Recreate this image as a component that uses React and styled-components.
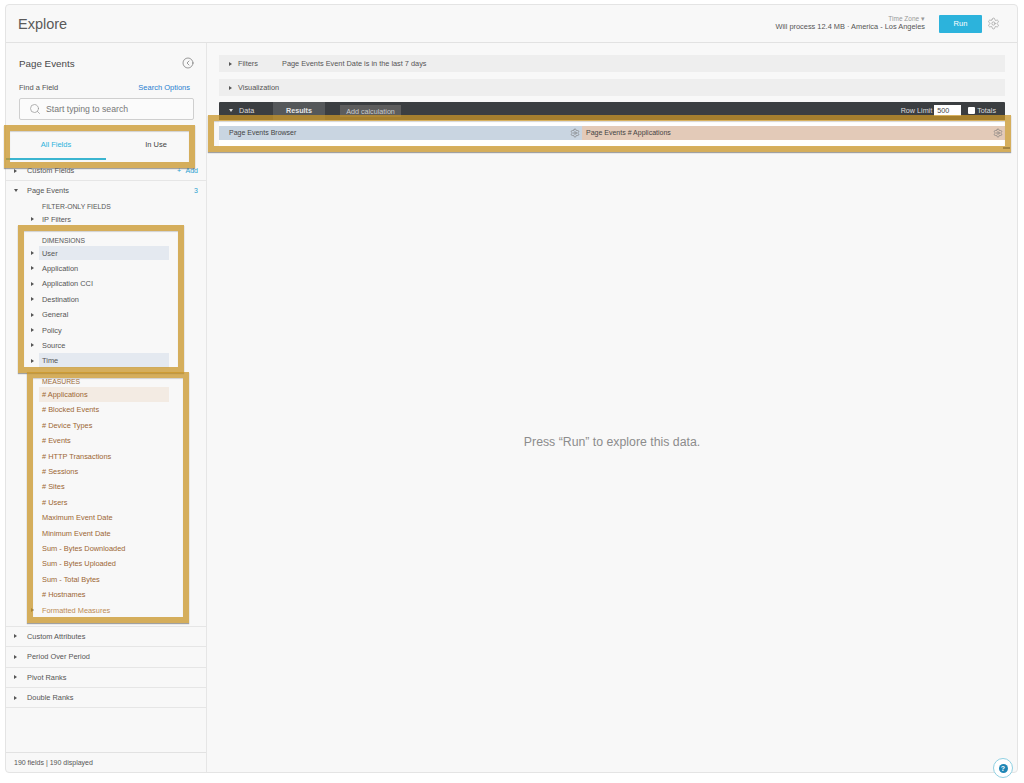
import React from 'react';
import styled, { createGlobalStyle } from 'styled-components';
import { Search, Settings, CircleChevronLeft } from 'lucide-react';

const GlobalStyle = createGlobalStyle`
  html, body {
    margin: 0;
    padding: 0;
    background: #fff;
  }
  body {
    font-family: "Liberation Sans", Arial, sans-serif;
    color: #555;
  }
  * {
    box-sizing: border-box;
  }
`;

const Page = styled.div`
  position: relative;
  width: 1024px;
  height: 783px;
  padding: 4px 6px 10px 5px;
  overflow: hidden;
`;

const Frame = styled.div`
  display: flex;
  flex-direction: column;
  height: 100%;
  background: #f8f8f8;
  border: 1px solid #e4e4e4;
  border-radius: 4px;
`;

const Header = styled.header`
  display: flex;
  align-items: center;
  flex: 0 0 38px;
  padding: 0 17px 0 12px;
  border-bottom: 1px solid #e2e2e2;
`;

const Title = styled.h1`
  flex: 1;
  margin: 0;
  font-size: 14.5px;
  font-weight: 400;
  color: #5a5a5a;
`;

const ProcessInfo = styled.div`
  display: flex;
  flex-direction: column;
  align-items: flex-end;
  margin-right: 14px;
`;

const TimeZone = styled.span`
  font-size: 6.5px;
  line-height: 7px;
  color: #999;
`;

const ProcessText = styled.span`
  font-size: 7.4px;
  line-height: 10px;
  color: #555;
`;

const RunButton = styled.button`
  width: 43px;
  height: 18px;
  padding: 0;
  border: none;
  border-radius: 1px;
  background: #2cb3dc;
  color: #fff;
  font-family: inherit;
  font-size: 7.5px;
`;

const HeaderGear = styled(Settings)`
  margin-left: 5px;
  color: #a5a5a5;
`;

const Body = styled.div`
  display: flex;
  flex: 1;
  min-height: 0;
`;

const Sidebar = styled.aside`
  display: flex;
  flex-direction: column;
  flex: 0 0 201px;
  border-right: 1px solid #e6e6e6;
`;

const SideHead = styled.div`
  padding: 0 12px 0 13px;
`;

const SideTitleRow = styled.div`
  display: flex;
  align-items: center;
  justify-content: space-between;
  height: 40px;
`;

const SideTitle = styled.h2`
  margin: 0;
  font-size: 9.8px;
  font-weight: 400;
  color: #484848;
`;

const CollapseIcon = styled(CircleChevronLeft)`
  color: #666;
`;

const FindRow = styled.div`
  display: flex;
  align-items: center;
  justify-content: space-between;
  height: 8px;
  padding-right: 4px;
  font-size: 7.5px;
  color: #555;
`;

const BlueLink = styled.span`
  color: #2a7fd0;
`;

const SearchBox = styled.div`
  display: flex;
  align-items: center;
  gap: 5px;
  height: 22px;
  margin-top: 7px;
  padding-left: 9px;
  background: #fbfbfb;
  border: 1px solid #cfcfcf;
  border-radius: 2px;
  font-size: 8.7px;
  color: #777;
`;

const SearchIcon = styled(Search)`
  color: #999;
`;

const Tabs = styled.div`
  display: flex;
  height: 28px;
  margin: 12px 0 1px;
`;

const Tab = styled.div`
  display: flex;
  align-items: center;
  justify-content: center;
  width: 100px;
  padding-bottom: 2px;
  font-size: 7.5px;
  color: ${(p) => (p.$active ? '#2cb3dc' : '#444')};
  border-bottom: 2px solid ${(p) => (p.$active ? '#3bb5d0' : 'transparent')};
`;

const SectionRow = styled.div`
  display: flex;
  align-items: center;
  height: ${(p) => p.$height || '20.4px'};
  padding: 0 8px;
  border-bottom: ${(p) => (p.$flat ? 'none' : '1px solid #e6e6e6')};
  font-size: 7.4px;
  color: #555;
`;

const Caret = styled.i`
  flex: none;
  width: 0;
  height: 0;
  ${(p) => (p.$open
    ? `border-left: 2.5px solid transparent;
       border-right: 2.5px solid transparent;
       border-top: 3px solid ${p.$color || '#555'};`
    : `border-top: 2.5px solid transparent;
       border-bottom: 2.5px solid transparent;
       border-left: 3px solid ${p.$color || '#555'};`)}
`;

const SectionName = styled.span`
  flex: 1;
  margin-left: ${(p) => (p.$open ? '9px' : '10px')};
`;

const SectionAside = styled.span`
  color: #2a9fd0;
  font-size: 7px;
  word-spacing: 3px;
`;

const FieldGroup = styled.div`
  padding: 2.8px 0 8px;
  border-bottom: 1px solid #e6e6e6;
`;

const GroupLabel = styled.div`
  height: 8.4px;
  margin-top: ${(p) => (p.$first ? '0' : '10px')};
  padding-left: 36px;
  font-size: 6.8px;
  line-height: 8.4px;
  color: ${(p) => (p.$measure ? '#9a6a3c' : '#555')};
`;

const FieldRow = styled.div`
  display: flex;
  align-items: center;
  height: 15.4px;
  padding-left: ${(p) => (p.$bare ? '28px' : '25px')};
`;

const FieldName = styled.div`
  display: flex;
  align-items: center;
  width: 130px;
  height: 14.6px;
  margin-left: 5px;
  padding-left: 3px;
  font-size: 7.4px;
  color: ${(p) => p.$color || '#555'};
  background: ${(p) => p.$bg || 'transparent'};
`;

const SideFooter = styled.div`
  display: flex;
  align-items: center;
  height: 20px;
  margin-top: auto;
  padding-left: 8px;
  border-top: 1px solid #e2e2e2;
  font-size: 7px;
  color: #555;
`;

const Main = styled.main`
  display: flex;
  flex-direction: column;
  flex: 1;
  min-width: 0;
  padding-top: 12px;
`;

const FoldBar = styled.div`
  display: flex;
  align-items: center;
  gap: 6px;
  height: 17px;
  margin: 0 12px ${(p) => (p.$tight ? '6px' : '7px')};
  padding-left: 10px;
  background: #eee;
  font-size: 7.35px;
  color: #555;
`;

const FoldSummary = styled.span`
  margin-left: 18px;
`;

const DataBar = styled.div`
  display: flex;
  align-items: flex-start;
  height: 18px;
  margin: 0 12px;
  padding-left: 10px;
  background: #3b3e41;
  border-radius: 1px 1px 0 0;
  font-size: 7.2px;
  color: #ddd;
`;

const DataLabel = styled.div`
  display: flex;
  align-items: center;
  gap: 6px;
  width: 44px;
  height: 13px;
  margin-top: 2px;
`;

const ResultsTab = styled.div`
  display: flex;
  align-items: center;
  justify-content: center;
  width: 52px;
  height: 18px;
  padding-bottom: 2px;
  background: #55585a;
  font-weight: 700;
  color: #e6e6e6;
`;

const AddCalc = styled.div`
  display: flex;
  align-items: center;
  justify-content: center;
  width: 61px;
  height: 12px;
  margin: 3px auto 0 15px;
  background: #5d5d5d;
  color: #ccc;
`;

const RowLimit = styled.div`
  display: flex;
  align-items: center;
  height: 13px;
  margin-top: 2px;
  padding-right: 9px;
  gap: 2px;
`;

const LimitInput = styled.div`
  width: 27px;
  height: 11px;
  margin-right: 5px;
  padding-left: 3px;
  background: #fff;
  color: #444;
  line-height: 11px;
`;

const TotalsBox = styled.div`
  width: 7px;
  height: 7px;
  background: #fff;
  border-radius: 1px;
`;

const ResultsTable = styled.div`
  display: flex;
  height: 27px;
  margin: 0 12px;
  padding-top: 6px;
  background: #fff;
`;

const Column = styled.div`
  display: flex;
  align-items: center;
  justify-content: space-between;
  flex: ${(p) => p.$grow};
  height: 13.5px;
  padding: 0 2px 0 ${(p) => p.$pad};
  background: ${(p) => p.$bg};
  font-size: 7px;
  color: #444;
`;

const ColumnGear = styled(Settings)`
  color: #777;
`;

const EmptyState = styled.div`
  display: flex;
  align-items: center;
  justify-content: center;
  flex: 1;
  padding-bottom: 35px;
  font-size: 12.3px;
  color: #8c8c8c;
`;

const GoldBox = styled.div`
  position: absolute;
  left: ${(p) => p.$x}px;
  top: ${(p) => p.$y}px;
  width: ${(p) => p.$w}px;
  height: ${(p) => p.$h}px;
  border: 6px solid rgba(201, 149, 40, 0.75);
  box-shadow: 0 1px 1px rgba(90, 90, 90, 0.55), inset 0 1px 1px rgba(90, 90, 90, 0.25);
  pointer-events: none;
`;

const GoldNick = styled.div`
  position: absolute;
  left: 1003px;
  top: 147px;
  width: 7px;
  height: 2px;
  background: #a58542;
`;

const HelpButton = styled.div`
  position: absolute;
  left: 993px;
  top: 758px;
  display: flex;
  align-items: center;
  justify-content: center;
  width: 20px;
  height: 20px;
  background: #fff;
  border: 1px solid #8fd0e2;
  border-radius: 50%;
`;

const HelpDot = styled.span`
  display: flex;
  align-items: center;
  justify-content: center;
  width: 9px;
  height: 9px;
  background: #1f86b5;
  border-radius: 50%;
  font-size: 7px;
  font-weight: 700;
  color: #fff;
`;

const dimensions = ['User', 'Application', 'Application CCI', 'Destination', 'General', 'Policy', 'Source', 'Time'];
const measures = [
  '# Applications', '# Blocked Events', '# Device Types', '# Events', '# HTTP Transactions',
  '# Sessions', '# Sites', '# Users', 'Maximum Event Date', 'Minimum Event Date',
  'Sum - Bytes Downloaded', 'Sum - Bytes Uploaded', 'Sum - Total Bytes', '# Hostnames',
];
const selectedDims = ['User', 'Time'];
const lowerSections = ['Custom Attributes', 'Period Over Period', 'Pivot Ranks', 'Double Ranks'];

const App = () => {
  return (
    <Page>
      <GlobalStyle />
      <Frame>
        <Header>
          <Title>Explore</Title>
          <ProcessInfo>
            <TimeZone>Time Zone ▾</TimeZone>
            <ProcessText>Will process 12.4 MB · America - Los Angeles</ProcessText>
          </ProcessInfo>
          <RunButton>Run</RunButton>
          <HeaderGear size={13} strokeWidth={1.5} />
        </Header>
        <Body>
          <Sidebar>
            <SideHead>
              <SideTitleRow>
                <SideTitle>Page Events</SideTitle>
                <CollapseIcon size={12} strokeWidth={1.3} />
              </SideTitleRow>
              <FindRow>
                <span>Find a Field</span>
                <BlueLink>Search Options</BlueLink>
              </FindRow>
              <SearchBox>
                <SearchIcon size={12} strokeWidth={1.5} />
                <span>Start typing to search</span>
              </SearchBox>
            </SideHead>
            <Tabs>
              <Tab $active>All Fields</Tab>
              <Tab>In Use</Tab>
            </Tabs>
            <SectionRow>
              <Caret />
              <SectionName>Custom Fields</SectionName>
              <SectionAside>+ Add</SectionAside>
            </SectionRow>
            <SectionRow $height="19px" $flat>
              <Caret $open />
              <SectionName $open>Page Events</SectionName>
              <SectionAside>3</SectionAside>
            </SectionRow>
            <FieldGroup>
              <GroupLabel $first>FILTER-ONLY FIELDS</GroupLabel>
              <FieldRow>
                <Caret />
                <FieldName>IP Filters</FieldName>
              </FieldRow>
              <GroupLabel>DIMENSIONS</GroupLabel>
              {dimensions.map((name) => (
                <FieldRow key={name}>
                  <Caret />
                  <FieldName $bg={selectedDims.includes(name) ? '#e4e9f0' : undefined}>{name}</FieldName>
                </FieldRow>
              ))}
              <GroupLabel $measure>MEASURES</GroupLabel>
              {measures.map((name) => (
                <FieldRow key={name} $bare>
                  <FieldName $color="#9c6632" $bg={name === '# Applications' ? '#f3ebe3' : undefined}>
                    {name}
                  </FieldName>
                </FieldRow>
              ))}
              <FieldRow>
                <Caret />
                <FieldName $color="#bb8a55">Formatted Measures</FieldName>
              </FieldRow>
            </FieldGroup>
            {lowerSections.map((name) => (
              <SectionRow key={name}>
                <Caret />
                <SectionName>{name}</SectionName>
              </SectionRow>
            ))}
            <SideFooter>190 fields | 190 displayed</SideFooter>
          </Sidebar>
          <Main>
            <FoldBar>
              <Caret />
              <span>Filters</span>
              <FoldSummary>Page Events Event Date is in the last 7 days</FoldSummary>
            </FoldBar>
            <FoldBar $tight>
              <Caret />
              <span>Visualization</span>
            </FoldBar>
            <DataBar>
              <DataLabel>
                <Caret $open $color="#ddd" />
                <span>Data</span>
              </DataLabel>
              <ResultsTab>Results</ResultsTab>
              <AddCalc>Add calculation</AddCalc>
              <RowLimit>
                <span>Row Limit</span>
                <LimitInput>500</LimitInput>
                <TotalsBox />
                <span>Totals</span>
              </RowLimit>
            </DataBar>
            <ResultsTable>
              <Column $grow="0 0 363px" $pad="10px" $bg="#c9d5e1">
                <span>Page Events Browser</span>
                <ColumnGear size={10} strokeWidth={1.5} />
              </Column>
              <Column $grow="1" $pad="4px" $bg="#e3cab8">
                <span>Page Events # Applications</span>
                <ColumnGear size={10} strokeWidth={1.5} />
              </Column>
            </ResultsTable>
            <EmptyState>Press “Run” to explore this data.</EmptyState>
          </Main>
        </Body>
      </Frame>
      <GoldBox $x={4} $y={125} $w={191} $h={43} />
      <GoldBox $x={18} $y={225} $w={166} $h={148} />
      <GoldBox $x={27} $y={372} $w={162} $h={251} />
      <GoldBox $x={208} $y={115} $w={803} $h={37} />
      <GoldNick />
      <HelpButton>
        <HelpDot>?</HelpDot>
      </HelpButton>
    </Page>
  );
};

export default App;
